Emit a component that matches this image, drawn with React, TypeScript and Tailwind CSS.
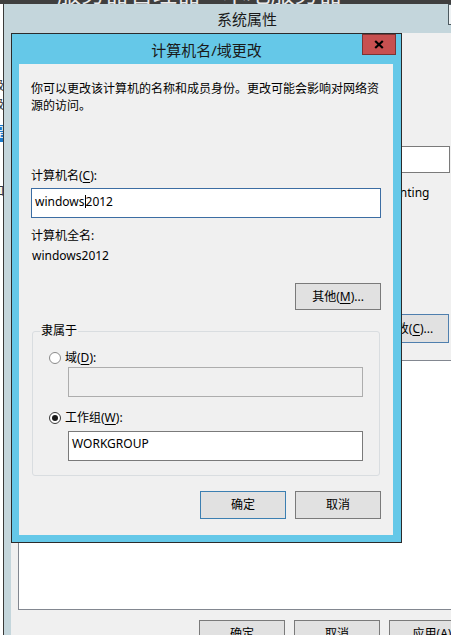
function U({ children }: { children: string }) {
  return <span className="underline underline-offset-[2px] decoration-1">{children}</span>;
}

function Radio({ checked }: { checked?: boolean }) {
  return (
    <div
      className={
        checked
          ? "w-[12px] h-[12px] rounded-full border border-[#3a3a3a] bg-white flex items-center justify-center"
          : "w-[12px] h-[12px] rounded-full border border-[#8a8a8a] bg-white"
      }
    >
      {checked ? <div className="w-[6px] h-[6px] rounded-full bg-[#1a1a1a]" /> : null}
    </div>
  );
}

export default function App() {
  return (
    <div className="relative w-[451px] h-[635px] overflow-hidden bg-[#f0f0f0] font-['Noto_Sans','Noto_Sans_CJK_SC',sans-serif] text-[12px] leading-[16px] text-black">
      {/* window behind, top */}
      <div className="absolute left-0 top-[-22px] w-[451px] h-[26px] bg-[#3f3f3f] overflow-hidden">
        <div className="pl-[57px] pt-[3px] text-[24px] leading-[24px] text-[#e8e8e8] whitespace-nowrap">
          服务器管理器 • 本地服务器
        </div>
      </div>

      {/* window behind, left */}
      <div className="absolute left-[-40px] top-[4px] w-[44px] h-[631px] bg-white flex flex-col items-end text-[#333]">
        <div className="mt-[74px] h-[16px] whitespace-nowrap">高级</div>
        <div className="mt-[3px] h-[16px] whitespace-nowrap">高级</div>
        <div className="mt-[12px] h-[17px] w-full bg-[#1979ca] text-white flex justify-end whitespace-nowrap">远程</div>
        <div className="mt-[41px] h-[16px] whitespace-nowrap">添加</div>
      </div>

      {/* background window: 系统属性 */}
      <div className="absolute left-[3px] top-[4px] w-[487px] h-[640px] border-l border-[#3a3a3a] bg-[#c4d6dc] flex flex-col">
        <div className="relative h-[29px] shrink-0 flex items-center justify-center text-[15px] leading-[20px] text-[#1a1a1a]">
          系统属性
          <div className="absolute left-[444px] top-0 w-[45px] h-[21px] border border-[#4d5a60] bg-[#eef2f4]" />
        </div>
        <div className="flex-1 ml-[7px] bg-[#f0f0f0] flex flex-col">
          <div className="mt-[113px] ml-[239px] w-[200px] h-[27px] border border-[#7a7a7a] bg-white" />
          <div className="mt-[12px] ml-[355px] whitespace-nowrap">Accounting</div>
          <div className="mt-[113px] ml-[358px] w-[80px] h-[29px] border border-[#4f7fae] bg-[#e1e1e1] flex items-center justify-center whitespace-nowrap">
            更改(<U>C</U>)...
          </div>
          <div className="mt-[17px] ml-[7px] w-[480px] h-[250px] border border-[#828790] bg-white" />
          <div className="mt-[10px] ml-[188px] flex gap-[9px]">
            <div className="w-[86px] h-[28px] border border-[#7a7a7a] bg-[#e1e1e1] flex items-center justify-center">确定</div>
            <div className="w-[86px] h-[28px] border border-[#7a7a7a] bg-[#e1e1e1] flex items-center justify-center">取消</div>
            <div className="w-[86px] h-[28px] border border-[#7a7a7a] bg-[#e1e1e1] flex items-center justify-center">
              应用(<U>A</U>)
            </div>
          </div>
        </div>
      </div>

      {/* dialog: 计算机名/域更改 */}
      <div className="absolute left-[11px] top-[33px] w-[391px] h-[510px] border border-[#2b2b2b] bg-[#65c8e8] flex flex-col">
        <div className="relative h-[30px] shrink-0 flex items-center justify-center pt-[2px] text-[15px] leading-[20px] text-[#1a1a1a]">
          计算机名/域更改
          <div className="absolute left-[350px] top-0 w-[34px] h-[21px] bg-[#c75050] border border-[#7b3434] flex items-center justify-center">
            <svg width="10" height="9" viewBox="0 0 10 9">
              <path d="M1.2 1 L8.8 8 M8.8 1 L1.2 8" stroke="#000" strokeWidth="2.2" fill="none" />
            </svg>
          </div>
        </div>

        <div className="flex-1 ml-[7px] mr-[8px] mb-[7px] bg-[#f0f0f0] px-[12px] pt-[16px] flex flex-col">
          <div className="leading-[17px] whitespace-nowrap">
            你可以更改该计算机的名称和成员身份。更改可能会影响对网络资
            <br />
            源的访问。
          </div>

          <div className="mt-[54px]">
            计算机名(<U>C</U>):
          </div>
          <div className="mt-[4px] h-[30px] border border-[#3c6da3] bg-white flex items-center pl-[3px] pb-[3px]">
            windows
            <span className="inline-block w-px h-[13px] bg-black" />
            2012
          </div>

          <div className="mt-[10px]">计算机全名:</div>
          <div className="mt-[4px] pl-[1px]">windows2012</div>

          <div className="mt-[19px] self-end w-[86px] h-[27px] border border-[#7a7a7a] bg-[#e1e1e1] flex items-center justify-center">
            其他(<U>M</U>)...
          </div>

          <div className="relative mt-[21px] mx-[1px] h-[145px] border border-[#d9dde0] rounded-[3px] flex flex-col">
            <div className="absolute left-[7px] top-[-9px] px-[1px] bg-[#f0f0f0]">隶属于</div>
            <div className="mt-[18px] ml-[16px] h-[16px] flex items-center gap-[4px]">
              <Radio />
              <span>
                域(<U>D</U>):
              </span>
            </div>
            <div className="mt-[1px] ml-[35px] w-[295px] h-[30px] border border-[#adadad] bg-[#f0f0f0]" />
            <div className="mt-[13px] ml-[16px] h-[16px] flex items-center gap-[4px]">
              <Radio checked />
              <span>
                工作组(<U>W</U>):
              </span>
            </div>
            <div className="mt-[5px] ml-[35px] w-[295px] h-[30px] border border-[#7a7a7a] bg-white flex items-center pl-[3px] pb-[4px]">
              WORKGROUP
            </div>
          </div>

          <div className="mt-[15px] flex justify-end gap-[9px]">
            <div className="w-[86px] h-[28px] border border-[#3c7fb1] bg-[#e1e1e1] flex items-center justify-center">确定</div>
            <div className="w-[86px] h-[28px] border border-[#7a7a7a] bg-[#e1e1e1] flex items-center justify-center">取消</div>
          </div>
        </div>
      </div>
    </div>
  );
}
